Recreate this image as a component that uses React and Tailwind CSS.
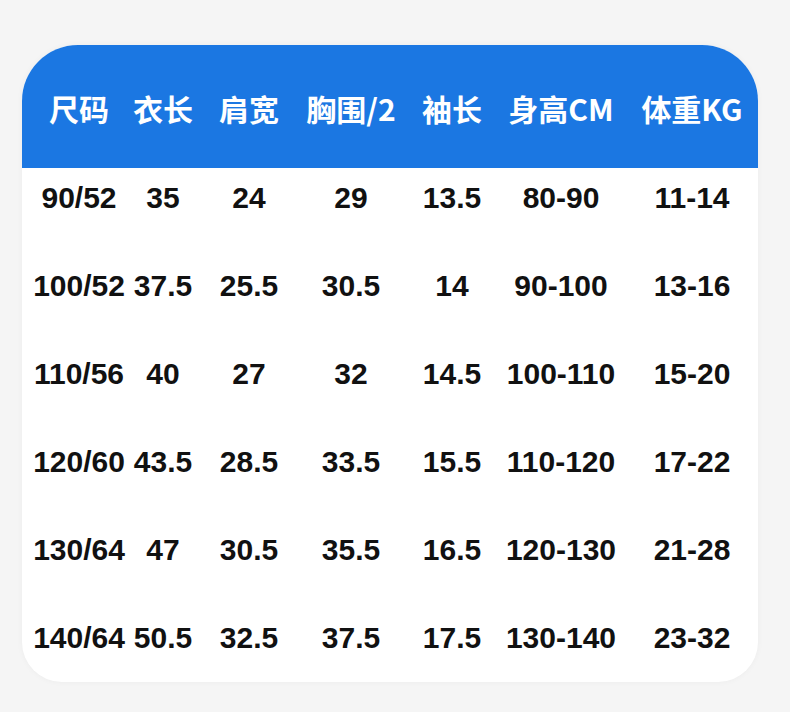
const headers = ['尺码', '衣长', '肩宽', '胸围/2', '袖长', '身高CM', '体重KG'];

const rows = [
  ['90/52', '35', '24', '29', '13.5', '80-90', '11-14'],
  ['100/52', '37.5', '25.5', '30.5', '14', '90-100', '13-16'],
  ['110/56', '40', '27', '32', '14.5', '100-110', '15-20'],
  ['120/60', '43.5', '28.5', '33.5', '15.5', '110-120', '17-22'],
  ['130/64', '47', '30.5', '35.5', '16.5', '120-130', '21-28'],
  ['140/64', '50.5', '32.5', '37.5', '17.5', '130-140', '23-32'],
];

const gridCols = 'grid grid-cols-[86px_82px_90px_114px_88px_130px_1fr] pl-[14px]';

export default function App() {
  return (
    <div className="w-[790px] h-[712px] bg-[#f5f5f5] pt-[45px] pl-[22px]">
      <div className="w-[736px] h-[637px] bg-white rounded-t-[56px] rounded-b-[40px] shadow-[0_0_6px_rgba(0,0,0,0.04)] overflow-hidden">
        <div className={`${gridCols} h-[123px] bg-[#1b77e2] items-center pt-[3px]`}>
          {headers.map((h) => (
            <div
              key={h}
              className="flex justify-center whitespace-nowrap text-white text-[30px] font-bold leading-none"
              style={{ fontFamily: '"Noto Sans CJK SC", "Noto Sans", sans-serif' }}
            >
              {h}
            </div>
          ))}
        </div>
        <div className="pt-[15px]">
          {rows.map((row, i) => (
            <div key={i} className={`${gridCols} h-[88px] items-start`}>
              {row.map((cell, j) => (
                <div
                  key={j}
                  className="flex justify-center whitespace-nowrap text-[#111111] text-[30px] font-bold leading-[30px]"
                  style={{ fontFamily: '"Liberation Sans", Arial, sans-serif' }}
                >
                  {cell}
                </div>
              ))}
            </div>
          ))}
        </div>
      </div>
    </div>
  );
}
